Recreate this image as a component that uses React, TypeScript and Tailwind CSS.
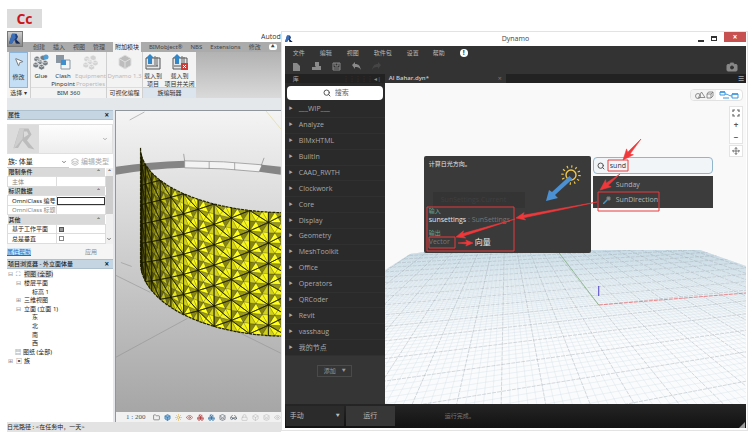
import { useState } from "react";
import {
  Box,
  Boxes,
  Camera,
  ChevronDown,
  Eye,
  Folder,
  Glasses,
  Layers,
  Lock,
  MousePointer2,
  Move,
  Search,
  Sun,
} from "lucide-react";

type Point = [number, number];

const categories = [
  "___WIP___",
  "Analyze",
  "BIMxHTML",
  "BuiltIn",
  "CAAD_RWTH",
  "Clockwork",
  "Core",
  "Display",
  "Geometry",
  "MeshToolkit",
  "Office",
  "Operators",
  "QRCoder",
  "Revit",
  "vasshaug",
  "我的节点",
];

const path = (points: Point[]) =>
  "M" + points.map(([x, y]) => `${x.toFixed(1)} ${y.toFixed(1)}`).join("L") + "Z";

// Curved facade: columns run round a quarter cylinder, rows run down it
const COLS = 12;
const ROWS = 6;

const facadePoint = (i: number, j: number): Point => {
  const t = (i / COLS) * (Math.PI / 2);
  const top = 147 + 65 * Math.sin(t);
  const bottom = 262 + 74 * Math.sin(t);
  return [140 + 150 * (1 - Math.cos(t)), top + ((bottom - top) * j) / ROWS];
};

const shades = ["#fafa14", "#f5f51c", "#9a9916", "#ffff1e", "#86850f", "#d3d21a"];

const mix = (a: Point, b: Point): Point => [(a[0] + b[0]) / 2, (a[1] + b[1]) / 2];

const facets: { d: string; fill: string }[] = [];
const frames: string[] = [];

const addTriangle = (a: Point, b: Point, c: Point, flip: number) => {
  const m: Point = [(a[0] + b[0] + c[0]) / 3, (a[1] + b[1] + c[1]) / 3];
  const corners = [a, mix(a, b), b, mix(b, c), c, mix(c, a)];
  corners.forEach((p, k) => {
    facets.push({
      d: path([p, corners[(k + 1) % 6], m]),
      fill: shades[(k + flip) % 6],
    });
  });
  frames.push(path([a, b, c]));
};

for (let i = -1; i <= COLS; i++) {
  for (let j = -1; j <= ROWS; j++) {
    const s = i % 2 === 0 ? 0 : 0.5;
    const a = facadePoint(i, j + s);
    const b = facadePoint(i, j + 1 + s);
    const c = facadePoint(i + 1, j + 0.5 + s);
    const next = facadePoint(i + 1, j + 0.5 + s + 1);
    addTriangle(a, c, b, 0);
    addTriangle(b, c, next, 3);
  }
}

const outline = () => {
  const top: Point[] = [];
  const bottom: Point[] = [];
  for (let i = 0; i <= COLS; i += 0.25) {
    top.push(facadePoint(i, 0));
    bottom.unshift(facadePoint(i, ROWS));
  }
  return path([...top, ...bottom]);
};

// Ground grid in two-point perspective
const ground = (a: number, b: number) => {
  const w = 1 + a + b;
  const x = (599 + a * 1740 + b * 506) / w;
  const y = (305 + (a + b) * 190) / w;
  return `${x.toFixed(1)} ${y.toFixed(1)}`;
};

const gridLines = (major: boolean) => {
  const parts: string[] = [];
  for (let n = -200; n <= 200; n++) {
    if ((n % 5 === 0) !== major) continue;
    const a = (n / 5) * 0.0193;
    parts.push(`M${ground(a, -0.55 - a)}L${ground(a, 0.95 - a)}`);
  }
  for (let n = -36; n <= 66; n++) {
    if ((n % 5 === 0) !== major) continue;
    const b = (n / 5) * 0.088;
    parts.push(`M${ground(Math.max(-0.4, -0.75 - b), b)}L${ground(0.4, b)}`);
  }
  return parts.join("");
};

const minorGrid = gridLines(false);
const majorGrid = gridLines(true);

const AppLogo = ({ className }: { className: string }) => (
  <svg viewBox="0 0 16 16" className={className}>
    <path d="M4 1h6l2 4-2 4 5 5H9L7 9l-3 5H0z" fill="#1e3f7c" />
    <path d="M4 1h4l1 5-5 8H0z" fill="#3d6fb8" />
    <path d="M9 9l6 5h-5z" fill="#12264f" />
  </svg>
);

const LoadIcon = ({ close }: { close?: boolean }) => (
  <svg viewBox="0 0 16 16" className="size-4 shrink-0">
    <path d="M1 4h14v11H1z" fill="#e4e7ea" stroke="#555" />
    <path d="M10 2v9M12 3v9" stroke="#666" />
    <path d="M5 0l4 4H7v6H3V4H1z" fill="#2f86c9" />
    <path d="M2 12h11" stroke="#555" />
    {close && (
      <>
        <path d="M9 9h7v7H9z" fill="#d53a36" />
        <path d="M11 11l3 3m0-3l-3 3" stroke="#fff" />
      </>
    )}
  </svg>
);

const ClashIcon = () => (
  <svg viewBox="0 0 16 16" className="size-4 shrink-0">
    <path d="M1 1h8v8H1z" fill="#8a97a3" />
    <path d="M6 6h9v9H6z" fill="#f3f5f6" stroke="#8a97a3" />
    <path d="M6 6h5v5H6z" fill="#3f8fce" />
  </svg>
);

// Cluster of small hexagonal blocks
const BlocksIcon = ({ className, globe }: { className: string; globe?: boolean }) => (
  <svg viewBox="0 0 16 16" className={className} fill="currentColor">
    <g stroke="#f3f3f3" strokeWidth=".6">
      <path d="M4 2l3 1.500v3L4 8 1 6.500v-3zM10 1l3 1.500v3L10 7 7 5.500v-3zM7 5l3 1.500v3L7 11 4 9.500v-3zM12 6l3 1.500v3L12 12 9 10.500v-3zM3 8l3 1.500v3L3 14 0 12.500v-3zM8.500 10l3 1.500v3l-3 1.500-3-1.500v-3z" />
      <path d="M1 3.500L4 5l3-1.500M4 6.500L7 8l3-1.500M9 7.500L12 9l3-1.500M5.500 11.500l3 1.500 3-1.500M0 9.500L3 11l3-1.500" fill="none" />
    </g>
    {globe && <circle cx="13" cy="3" r="2.500" fill="#4f9fd6" />}
  </svg>
);

const Arrow = ({ from, to, size = 6 }: { from: Point; to: Point; size?: number }) => {
  const dx = to[0] - from[0];
  const dy = to[1] - from[1];
  const len = Math.hypot(dx, dy);
  const ux = dx / len;
  const uy = dy / len;
  const at = (back: number, side: number): Point => [
    to[0] - ux * back - uy * side,
    to[1] - uy * back + ux * side,
  ];
  const points = [
    from,
    at(size * 1.5, size * 0.25),
    at(size * 1.8, size * 0.75),
    to,
    at(size * 1.8, -size * 0.75),
    at(size * 1.5, -size * 0.25),
  ];
  return <path d={path(points)} fill="#f0383a" stroke="#f0383a" strokeWidth=".6" />;
};

const Ribbon = () => (
  <div className="flex h-[46px] bg-linear-to-b from-[#b2b2b2] to-[#dadada] text-[6px] leading-[8px] text-[#333]">
    <div className="flex w-6 flex-col items-center border-r border-[#d0d0d0] bg-[#f3f3f3]">
      <button className="flex h-9 w-[19px] flex-col items-center justify-between border border-[#8bb5dc] bg-[#c4def5] pt-1 pb-1.5">
        <MousePointer2 className="size-2.5 fill-white text-[#666]" strokeWidth={2} />
        修改
      </button>
      <span className="pt-px">选择&nbsp;▾</span>
    </div>
    <div className="flex w-[76px] flex-col border-r border-[#d0d0d0] bg-[#f3f3f3]">
      <div className="flex h-9 border-b border-[#ddd]">
        <button className="flex w-5 flex-col items-center gap-0.5 pt-0.5">
          <BlocksIcon className="size-4 shrink-0 text-[#727b82]" globe />
          Glue
        </button>
        <button className="flex w-6 flex-col items-center gap-0.5 pt-0.5">
          <ClashIcon />
          <span>Clash Pinpoint</span>
        </button>
        <button disabled className="flex flex-1 flex-col items-center gap-0.5 pt-0.5 text-[#b9b9b9]">
          <BlocksIcon className="size-4 shrink-0 text-[#d2d2d2]" />
          <span>Equipment Properties</span>
        </button>
      </div>
      <span className="pt-px text-center">BIM 360</span>
    </div>
    <div className="flex w-9 flex-col items-center border-r border-[#d0d0d0] bg-[#f3f3f3]">
      <button disabled className="flex h-9 w-full flex-col items-center gap-0.5 border-b border-[#ddd] pt-0.5 whitespace-nowrap text-[#b9b9b9]">
        <Box className="size-4 shrink-0 fill-[#bdbdbd] text-[#dedede]" strokeWidth={1.5} />
        Dynamo 1.3
      </button>
      <span className="pt-px">可视化编程</span>
    </div>
    <div className="flex w-[53px] flex-col bg-[#f3f3f3]">
      <div className="flex h-9 justify-center border-b border-[#c5d0da]">
        <button className="flex w-5 flex-col items-center gap-0.5 pt-0.5 whitespace-nowrap">
          <LoadIcon />
          <span>载入到<br />项目</span>
        </button>
        <button className="flex flex-1 flex-col items-center gap-0.5 pt-0.5 whitespace-nowrap">
          <LoadIcon close />
          <span>载入到<br />项目并关闭</span>
        </button>
      </div>
      <span className="flex-1 bg-[#dce5ee] pt-px text-center">族编辑器</span>
    </div>
  </div>
);

const PanelTitle = ({ children }: { children: string }) => (
  <div className="flex h-2.5 items-center justify-between border-y border-[#aebfcd] bg-[#c5d5e2] px-px pr-1 text-[6px] leading-[8px] font-medium text-[#222]">
    <h2>{children}</h2>
    <button aria-label={`关闭 ${children}`} className="text-[8px] font-bold">×</button>
  </div>
);

const GroupRow = ({ children }: { children: string }) => (
  <tr className="bg-[#d9d9d9]">
    <th colSpan={2} className="p-0 text-left font-medium">
      <div className="flex justify-between pr-1 pl-px">
        {children}
        <span>⌃</span>
      </div>
    </th>
  </tr>
);

const Properties = () => (
  <section className="flex h-[149px] flex-col">
    <PanelTitle>属性</PanelTitle>
    <div className="mt-1 flex h-[30px] items-center justify-between border border-[#e0e0e0] bg-linear-to-b from-[#fdfdfd] to-[#ededed] pr-1">
      <div className="flex h-full w-[31px] items-center justify-center bg-[#dcdcdc]">
        <svg viewBox="0 0 16 16" className="size-6">
          <path d="M5 1h6l2 4-3 4 5 6-4-1-4-5-3 5H1z" fill="#bcbcbc" />
          <path d="M5 1h3l-1 7-6 7z" fill="#cecece" />
          <path d="M8 3h2l1 2-3 2z" fill="#dcdcdc" />
        </svg>
      </div>
      <ChevronDown className="size-1.5 text-[#666]" />
    </div>
    <div className="mt-0.5 flex h-3 items-center justify-between gap-1 text-[7px] leading-[8px]">
      <select aria-label="族" className="h-3 w-[66px] appearance-none border-b border-[#ccc] pl-px text-[#222]">
        <option>族: 体量</option>
      </select>
      <ChevronDown className="-ml-3 size-1.5 shrink-0" />
      <button disabled className="flex items-center gap-0.5 pr-1 whitespace-nowrap text-[#a8a8a8]">
        <Layers className="size-2" />
        编辑类型
      </button>
    </div>
    <div className="flex h-[76px]">
      <table className="h-full flex-1 border-collapse text-[6px] leading-[8px] whitespace-nowrap text-[#222] [&_td]:border [&_td]:border-[#ddd] [&_td]:p-0 [&_td:first-child]:pl-1">
        <tbody>
          <GroupRow>限制条件</GroupRow>
          <tr className="text-[#888]"><td>主体</td><td className="w-12" /></tr>
          <GroupRow>标识数据</GroupRow>
          <tr>
            <td><label htmlFor="omni">OmniClass 编号</label></td>
            <td>
              <input id="omni" className="block h-2 w-12 border border-[#333]" />
            </td>
          </tr>
          <tr className="text-[#888]"><td>OmniClass 标题</td><td /></tr>
          <GroupRow>其他</GroupRow>
          <tr>
            <td><label htmlFor="workplane">基于工作平面</label></td>
            <td><input id="workplane" type="checkbox" defaultChecked className="ml-0.5 block size-[5px] appearance-none border border-[#555] checked:bg-[#999]" /></td>
          </tr>
          <tr>
            <td><label htmlFor="vertical">总是垂直</label></td>
            <td><input id="vertical" type="checkbox" className="ml-0.5 block size-[5px] appearance-none border border-[#888]" /></td>
          </tr>
        </tbody>
      </table>
      <div className="flex w-2 flex-col items-center bg-[#f0f0f0] text-[6px] leading-[8px]">
        <span>⌃</span>
        <span className="h-[38px] w-full bg-[#cdcdcd]" />
        <ChevronDown className="mt-auto mb-0.5 size-1.5" />
      </div>
    </div>
    <div className="flex flex-1 items-center justify-between bg-[#f5f5f5] pr-4 text-[6px] leading-[8px]">
      <a href="#help" className="bg-[#cfe5f8] text-[#1b6fc0] underline">属性帮助</a>
      <button disabled className="text-[#8a8a8a]">应用</button>
    </div>
  </section>
);

const browser = [
  { sign: "⊟", label: "视图 (全部)", pad: "pl-px", mark: "⛶", root: true },
  { sign: "⊟", label: "楼层平面", pad: "pl-[9px]" },
  { sign: "", label: "标高 1", pad: "pl-[25px]" },
  { sign: "⊞", label: "三维视图", pad: "pl-[9px]" },
  { sign: "⊟", label: "立面 (立面 1)", pad: "pl-[9px]" },
  { sign: "", label: "东", pad: "pl-[25px]" },
  { sign: "", label: "北", pad: "pl-[25px]" },
  { sign: "", label: "南", pad: "pl-[25px]" },
  { sign: "", label: "西", pad: "pl-[25px]" },
  { sign: "", label: "图纸 (全部)", pad: "pl-2", mark: "▤" },
  { sign: "⊞", label: "族", pad: "pl-px", mark: "▣" },
];

const ProjectBrowser = () => (
  <section className="flex flex-1 flex-col bg-white">
    <PanelTitle>项目浏览器 - 外立面体量</PanelTitle>
    <ul className="grid h-24 auto-rows-fr items-center pt-px text-[6px] leading-[8px] text-[#222]">
      {browser.map((item) => (
        <li key={item.label} className={`flex items-center ${item.pad}`}>
          {item.sign && <span className="w-2 text-[#888]">{item.sign}</span>}
          {item.mark && <span className="w-2 text-[#555]">{item.mark}</span>}
          <span className={item.root ? "bg-[#dedede]" : ""}>{item.label}</span>
        </li>
      ))}
    </ul>
  </section>
);

const ModelView = () => (
  <div className="flex min-w-0 flex-1 flex-col border-t border-l border-[#8f969c]">
    <div className="min-h-0 flex-1 bg-linear-to-b from-[#f4f4f4] to-[#a6a6a6]">
      <svg viewBox="115 110 168 302" preserveAspectRatio="none" className="size-full">
        <defs>
          <clipPath id="facade">
            <path d={outline()} />
          </clipPath>
          <linearGradient id="edge">
            <stop offset="0" stopColor="#1c1c00" stopOpacity=".6" />
            <stop offset=".3" stopColor="#1c1c00" stopOpacity="0" />
          </linearGradient>
        </defs>
        <path d="M115 275L150 292M115 357L188 318M240 332L283 353M120 262l11 4M129 119l15-8" stroke="#929292" strokeWidth=".6" />
        <path d="M268 110l15 18" stroke="#e2d9a0" strokeWidth=".7" />
        <path d="M115 166Q150 161 185 160V167Q150 168 115 174Z" fill="#858585" />
        <path d="M185 160Q225 160 264 164L261 171Q225 167 185 167Z" fill="#f3f3f3" stroke="#777" strokeWidth=".6" />
        <path d="M264 164L283 166V174L261 171Z" fill="#858585" />
        <path d="M184 153l1 7M210 161v7M236 162v7M266 157l-3 8" stroke="#777" strokeWidth=".6" />
        <g clipPath="url(#facade)" stroke="#171700">
          <g strokeWidth=".2">
            {facets.map((f, n) => (
              <path key={n} d={f.d} fill={f.fill} />
            ))}
          </g>
          <path d={frames.join("")} fill="none" strokeWidth=".6" />
          <path d="M140 147H283V336H140Z" fill="url(#edge)" stroke="none" />
        </g>
        <path d={outline()} fill="none" stroke="#222200" strokeWidth="1.2" strokeDasharray="3 1" />
      </svg>
    </div>
    <div className="flex h-2.5 items-center justify-between bg-[#f1f1f1] pl-2.5 text-[#4a5661]">
      <span className="mr-1 font-['Liberation_Serif',serif] text-[7px] leading-[8px] whitespace-pre">1 : 200</span>
      <Folder className="size-[7px] text-[#555]" />
      <Box className="size-[7px] fill-[#7fb2dc] text-[#2d6fa5]" />
      <Sun className="size-[7px] text-[#d6a21c]" />
      <Eye className="size-[7px] text-[#b33c3c]" />
      <Boxes className="size-[7px] text-[#b33c3c]" />
      <Boxes className="size-[7px] text-[#2d6fa5]" />
      <Layers className="size-[7px]" />
      <Glasses className="size-[7px]" />
      <Lock className="size-[7px] text-[#bbb]" />
      <Box className="size-[7px] text-[#bbb]" />
      <Layers className="size-[7px] text-[#bbb]" />
      <Eye className="size-[7px] text-[#bbb]" />
    </div>
  </div>
);

const RevitWindow = () => (
  <main className="flex min-w-0 flex-[276] flex-col pt-[9px]">
    <div className="flex h-[19px] w-[35px] items-center justify-center bg-[#dcdcdc] font-['Open_Sans',sans-serif] text-[14px] font-bold text-[#cc1420]">
      Cc
    </div>
    <header className="flex h-[24px]">
      <div className="flex w-4 shrink-0 flex-col pt-[3px]">
        <button aria-label="应用程序菜单" className="flex h-4 items-center justify-center border border-[#777] bg-linear-to-b from-[#d0d0d0] to-[#888]">
          <AppLogo className="size-3" />
        </button>
        <span className="flex-1 bg-[#ababab]" />
      </div>
      <div className="flex min-w-0 flex-1 flex-col justify-between">
        <span className="h-3.5 self-end overflow-hidden pt-1 font-['Open_Sans',sans-serif] text-[7px] leading-[10px] text-[#333]">
          Autod
        </span>
        <nav className="flex h-2.5 items-center justify-between bg-[#ababab] pr-1 pl-2.5 text-[6px] leading-[8px] whitespace-nowrap text-[#444]">
          <button>创建</button>
          <button>插入</button>
          <button>视图</button>
          <button>管理</button>
          <button className="h-2.5 bg-[#f3f3f3] px-0.5 text-[#222]">附加模块</button>
          <button>BIMobject®</button>
          <button>NBS</button>
          <button>Extensions</button>
          <button>修改</button>
          <button aria-label="最小化功能区" className="flex h-1.5 w-2 items-center justify-center rounded-xs bg-white text-[4px]">▲</button>
        </nav>
      </div>
    </header>
    <Ribbon />
    <div className="h-3 bg-[#e5e8ea]" />
    <div className="flex min-h-0 flex-1 bg-[#e5e8ea]">
      <aside className="mr-0.5 flex w-[106px] shrink-0 flex-col bg-white">
        <Properties />
        <ProjectBrowser />
      </aside>
      <ModelView />
    </div>
    <footer className="flex h-2.5 items-center bg-[#e3e3e3] text-[6px] leading-[8px] text-[#222]">
      日光路径 : &lt;在任务中，一天&gt;
    </footer>
  </main>
);

const Library = () => (
  <aside className="flex w-[100px] shrink-0 flex-col bg-[#353535] text-[#a9a9a9]">
    <div className="flex h-[9px] items-center justify-between bg-[#222] pr-1 pl-2 text-[6px] leading-[8px]">
      <h2>库</h2>
      <span className="text-[#888]"><span className="text-[#555]">┆┆┆┆┆</span> ◂|</span>
    </div>
    <div className="bg-[#2a2a2a] px-0.5 pt-[3px] pb-0.5">
      <label className="flex h-[14px] items-center rounded-sm bg-white pl-9 text-[#555]">
        <Search className="size-2 shrink-0" strokeWidth={3} />
        <input type="search" aria-label="搜索" placeholder="搜索" className="ml-1 w-8 text-[7px] leading-[10px] placeholder:text-[#666]" />
      </label>
    </div>
    <ul className="grid h-[254px] auto-rows-fr bg-[#2a2a2a] text-[7px] leading-[10px]">
      {categories.map((name) => (
        <li key={name} className="flex border-b border-[#303030]">
          <button className="flex w-full items-center gap-1.5 pl-1">
            <span className="w-1 text-[4px]">▶</span>
            {name}
          </button>
        </li>
      ))}
    </ul>
    <button className="mt-[9px] flex h-3 w-[35px] items-center justify-center gap-1.5 self-center border border-[#4a4a4a] text-[6px] leading-[8px] text-[#999]">
      添加 <span className="text-[4px]">▼</span>
    </button>
  </aside>
);

const Workspace = () => {
  const [query, setQuery] = useState("sund");

  return (
    <div className="relative min-w-0 flex-1 overflow-hidden bg-[#f9f9f9]">
      <svg viewBox="386 83 360 321" preserveAspectRatio="none" className="absolute inset-0 size-full">
        <defs>
          <clipPath id="ground">
            <path d="M386 270L411 254L440 250H700L746 266V404H386Z" />
          </clipPath>
          <linearGradient id="haze" x2="0" y2="1">
            <stop offset="0" stopColor="#d5e6ef" />
            <stop offset=".2" stopColor="#e9f1f5" />
            <stop offset=".6" stopColor="#fafbfc" />
          </linearGradient>
        </defs>
        <g clipPath="url(#ground)" fill="none">
          <path d="M386 246H746V404H386Z" fill="url(#haze)" />
          <path d={minorGrid} stroke="#bfd3de" strokeWidth=".25" />
          <path d={majorGrid} stroke="#98a5ad" strokeWidth=".4" strokeDasharray="4 1" />
        </g>
        <path d="M599 305L558 251" stroke="#7fae7c" strokeWidth=".8" />
        <path d="M599 305L746 293" stroke="#ea7b7f" strokeWidth=".9" strokeDasharray="4 1" />
        <path d="M599 296V286" stroke="#4b3fc4" />
      </svg>

      <div className="absolute top-1.5 right-[3px] flex h-3 overflow-hidden rounded-sm border border-[#e2e2e2] bg-white">
        <button aria-label="几何视图" className="flex w-[25px] items-center justify-center bg-[#f4f4f4]">
          <svg viewBox="0 0 20 8" className="h-2 w-5" fill="none" stroke="#777" strokeWidth=".8">
            <circle cx="4" cy="5" r="2.5" />
            <path d="M7.500 1L11 6.500H4.500zM13 3h4v4h-4zM13 3l1.500-2H19v4l-2 2M17 3l2-2" />
          </svg>
        </button>
        <button aria-label="图形视图" className="flex w-[26px] items-center justify-center">
          <svg viewBox="0 0 20 8" className="h-2 w-5" fill="none" stroke="#3d97dc" strokeWidth="1">
            <path d="M1 1h5v3H1zM13 3h6v4h-6zM6 3c4 0 3 2 7 2M4 7h6" />
            <path d="M13 3h6M1 1h5" strokeWidth="1.600" />
          </svg>
        </button>
      </div>
      <div className="absolute top-[23px] right-[3px] flex w-[14px] flex-col items-center border border-[#e4e4e4] bg-white text-[8px] leading-[12px] font-bold text-[#555]">
        <button aria-label="适合窗口" className="flex h-3 items-center">
          <svg viewBox="0 0 8 8" className="size-2" fill="none" stroke="#666" strokeWidth="1.200">
            <path d="M1 3V1h2M5 1h2v2M7 5v2H5M3 7H1V5" />
          </svg>
        </button>
        <button aria-label="放大">+</button>
        <button aria-label="缩小">−</button>
      </div>
      <button aria-label="平移" className="absolute top-[62px] right-[3px] flex h-3 w-[14px] items-center justify-center border border-[#e4e4e4] bg-white text-[#666]">
        <Move className="size-2" strokeWidth={2.5} />
      </button>

      <div className="absolute top-[73px] left-[39px] flex h-[97px] w-[167px] flex-col rounded-xs bg-[#3a3a3a] px-[5px] pt-1 text-[7px] leading-[9px] text-[#e5e5e5]">
        <p className="h-8 text-[6px]">计算日光方向。</p>
        <div className="ml-1 h-4 w-[92px] overflow-hidden bg-[#343434] pl-2 leading-[16px] whitespace-nowrap text-[#404040]">SunSettings.Current</div>
        <p className="text-[6px] leading-[7px] text-[#65a79b]">输入</p>
        <p>sunsettings <span className="text-[#777]">: SunSettings</span></p>
        <p className="mt-1.5 text-[6px] leading-[7px] text-[#65a79b]">输出</p>
        <p className="flex items-center leading-[10px] text-[#777]">
          <span className="w-[46px]">Vector</span>
          <span className="text-[8px] text-[#eee]">向量</span>
        </p>
      </div>

      <div className="absolute top-[74px] left-[208px] flex w-[120px] flex-col gap-0.5 text-[7px] leading-[10px]">
        <label className="flex h-[17px] items-center rounded-sm border border-[#91b6cc] bg-[#f1f5f7] pl-[3px] text-[#555]">
          <Search className="size-2 shrink-0" strokeWidth={3} />
          <input
            aria-label="搜索节点"
            value={query}
            onChange={(e) => setQuery(e.target.value)}
            className="ml-[5px] w-full min-w-0 text-[#333]"
          />
        </label>
        <ul className="bg-[#3c3c3c] text-[#b5b5b5]">
          <li><button className="flex h-[17px] w-full items-center pl-[23px]">Sunday</button></li>
          <li>
            <button className="flex h-[15px] w-full items-center gap-[5px] pb-0.5 pl-2.5">
              <svg viewBox="0 0 8 8" className="size-2" stroke="#4c93b5">
                <path d="M0 8l4-4" strokeWidth="1.500" />
                <path d="M4 1h3v3H4z" fill="#8a8a8a" stroke="#777" />
              </svg>
              SunDirection
            </button>
          </li>
        </ul>
      </div>

      <svg viewBox="386 83 360 321" className="pointer-events-none absolute top-0 left-0 h-[321px] w-[360px]" fill="none">
        <circle cx="572" cy="175" r="5" stroke="#eec64b" strokeWidth="1.400" />
        <circle cx="572" cy="175" r="8.500" stroke="#eec64b" strokeWidth="2.500" strokeDasharray="1.200 3.250" />
        <path d="M570.500 176L573.500 179L556 195L559 198L547 201L550 190L553 192Z" fill="#4a90d3" />
        <g stroke="#e93b3d">
          <path d="M428 207H515V251H428ZM430 237H456V248H430ZM609 160H629V171H609ZM599 192H660V211H599Z" />
        </g>
        <Arrow from={[642, 139]} to={[624, 160]} />
        <Arrow from={[621, 174]} to={[601, 190]} />
        <Arrow from={[598, 202]} to={[517, 218]} size={5} />
        <Arrow from={[516, 219]} to={[457, 237]} size={5} />
        <Arrow from={[459, 243]} to={[474, 243]} size={4} />
      </svg>
    </div>
  );
};

const DynamoWindow = () => (
  <section className="mt-[31px] mb-px flex min-w-0 flex-[465] flex-col border border-[#e3e3e3] bg-white pr-px pb-0.5 pl-[3px] font-['Open_Sans','Noto_Sans_CJK_SC',sans-serif]">
    <header className="flex h-[14px] items-center">
      <div className="flex-1"><AppLogo className="size-2" /></div>
      <h1 className="text-[7px] leading-[10px] text-[#444]">Dynamo</h1>
      <div className="flex h-full flex-1 justify-end gap-[7px]">
        <button aria-label="最小化" className="mb-1 h-1.5 w-1.5 self-end border-b-2 border-[#333]" />
        <button aria-label="最大化" className="mt-1 h-[5px] w-1.5 border border-t-2 border-[#333]" />
        <button aria-label="关闭" className="flex h-2.5 w-[22px] items-center justify-center bg-[#c75050] text-[8px] font-bold text-white">×</button>
      </div>
    </header>
    <nav className="flex h-[13px] items-center gap-[11px] bg-[#333] pl-2 text-[6px] leading-[8px] text-[#b8b8b8]">
      <button className="w-4 text-left">文件</button>
      <button className="w-4 text-left">编辑</button>
      <button className="w-4 text-left">视图</button>
      <button className="w-[22px] text-left whitespace-nowrap">软件包</button>
      <button className="w-[15px] text-left">设置</button>
      <button className="w-4 text-left">帮助</button>
      <button aria-label="通知" className="flex size-2 items-center justify-center rounded-full bg-white text-[7px] font-bold text-[#333]">!</button>
    </nav>
    <div className="flex h-[15px] items-center gap-[11px] bg-[#333] pr-2 pl-[7px] text-[#888]">
      <button aria-label="新建">
        <svg viewBox="0 0 9 9" className="size-[9px]" fill="#8a8a8a">
          <path d="M1 1h4l3 3v5H1z" />
        </svg>
      </button>
      <button aria-label="打开">
        <svg viewBox="0 0 9 9" className="size-[9px]" fill="#8a8a8a">
          <path d="M3 0h4v4H3zM0 5h3l1-1h5v4H0z" />
        </svg>
      </button>
      <button aria-label="保存">
        <svg viewBox="0 0 9 9" className="size-[9px]" fill="none" stroke="#8a8a8a">
          <path d="M1 1h7v7H1zM3 1v3h3V1M1 6h7" />
        </svg>
      </button>
      <button aria-label="撤消">
        <svg viewBox="0 0 9 9" className="size-[9px]" fill="#8a8a8a">
          <path d="M0 3l3-3v2c4 0 5 2 6 6-2-3-3-3-6-3v2z" />
        </svg>
      </button>
      <button aria-label="重做">
        <svg viewBox="0 0 9 9" className="size-[9px]" fill="#454545">
          <path d="M9 3L6 0v2C2 2 1 4 0 8c2-3 3-3 6-3v2z" />
        </svg>
      </button>
      <button aria-label="导出图像" className="ml-auto">
        <Camera className="size-3 fill-[#888] stroke-[#888] [&_circle]:fill-[#333] [&_circle]:stroke-[#333]" />
      </button>
    </div>
    <div className="flex min-h-0 flex-1">
      <Library />
      <div className="flex min-w-0 flex-1 flex-col">
        <div className="flex h-[9px] items-center justify-between bg-[#222] pr-0.5 text-[7px] leading-[9px] text-[#aaa]">
          <div className="flex h-full w-[121px] items-center justify-between bg-[#333] px-1">
            <button className="text-[6px] font-semibold text-[#ccc]">Al Bahar.dyn*</button>
            <button aria-label="关闭选项卡" className="text-[#777]">×</button>
          </div>
          <button aria-label="选项卡列表">☰</button>
        </div>
        <Workspace />
      </div>
    </div>
    <footer className="flex h-6 items-center gap-0.5 bg-linear-to-b from-[#252525] to-[#121212] px-px text-[7px] leading-[10px] text-[#bbb]">
      <label className="relative flex h-5 w-[58px] items-center bg-[#2b2b2b]">
        <select aria-label="运行模式" className="w-full appearance-none pl-1">
          <option>手动</option>
          <option>自动</option>
        </select>
        <span className="pointer-events-none absolute right-1 text-[4px]">▼</span>
      </label>
      <button className="h-5 w-[49px] bg-[#373737]">运行</button>
      <p className="pl-12 text-[6px] text-[#777]">运行完成。</p>
      <svg viewBox="0 0 6 6" className="ml-auto size-1.5 self-end">
        <path d="M6 0v6H0z" fill="#999" />
      </svg>
    </footer>
  </section>
);

const App = () => (
  <div className="flex h-screen min-h-[435px] w-full bg-white pr-0.5 pb-[3px] pl-[7px] font-['Noto_Sans','Noto_Sans_CJK_SC',sans-serif]">
    <RevitWindow />
    <DynamoWindow />
  </div>
);

export default App;
